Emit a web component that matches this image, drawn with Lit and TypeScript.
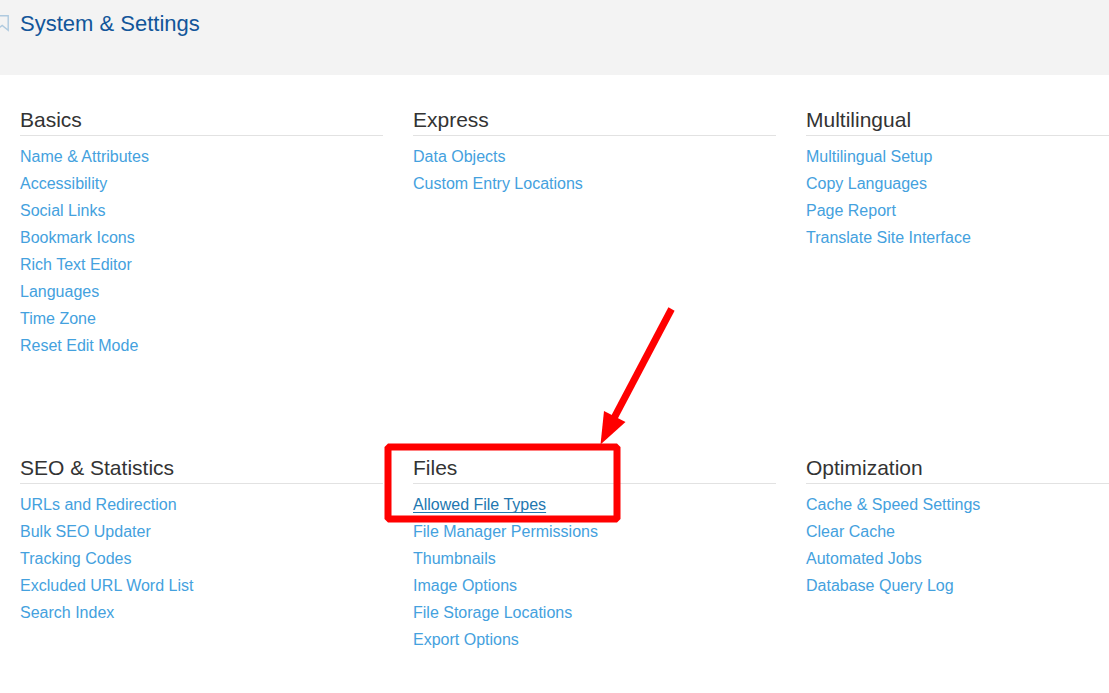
import { LitElement, html, css } from "lit";
import { customElement } from "lit/decorators.js";

interface Section {
  title: string;
  links: string[];
}

const sections: Section[] = [
  { title: "Basics", links: ["Name & Attributes", "Accessibility", "Social Links", "Bookmark Icons", "Rich Text Editor", "Languages", "Time Zone", "Reset Edit Mode"] },
  { title: "Express", links: ["Data Objects", "Custom Entry Locations"] },
  { title: "Multilingual", links: ["Multilingual Setup", "Copy Languages", "Page Report", "Translate Site Interface"] },
  { title: "SEO & Statistics", links: ["URLs and Redirection", "Bulk SEO Updater", "Tracking Codes", "Excluded URL Word List", "Search Index"] },
  { title: "Files", links: ["Allowed File Types", "File Manager Permissions", "Thumbnails", "Image Options", "File Storage Locations", "Export Options"] },
  { title: "Optimization", links: ["Cache & Speed Settings", "Clear Cache", "Automated Jobs", "Database Query Log"] },
];

const current = "Allowed File Types";

@customElement("app-root")
export class AppRoot extends LitElement {
  static styles = css`
    :host {
      display: block;
      position: relative;
      overflow: hidden;
      min-height: 100vh;
      background: #fff;
      color: #333;
      font: 16px/27px "Liberation Sans", Arial, sans-serif;
    }
    header {
      display: flex;
      align-items: flex-start;
      gap: 11px;
      box-sizing: border-box;
      height: 75px;
      padding-top: 8px;
      background: #f3f3f3;
    }
    .bookmark {
      flex: none;
      width: 9px;
      height: 17px;
      margin-top: 7px;
      padding: 0;
      border: 0;
      background: none;
    }
    .bookmark svg {
      display: block;
    }
    h1 {
      margin: 0;
      font-size: 22px;
      line-height: 32px;
      font-weight: 400;
      color: #12569a;
    }
    main {
      display: grid;
      grid-template-columns: repeat(3, minmax(0, 1fr));
      column-gap: 30px;
      row-gap: 96px;
      margin-right: -60px;
      padding: 32px 0 40px 20px;
    }
    h2 {
      margin: 0 0 7px;
      padding-bottom: 2px;
      border-bottom: 1px solid #e2e2e2;
      font-size: 21px;
      line-height: 26px;
      font-weight: 400;
    }
    ul {
      margin: 0;
      padding: 0;
      list-style: none;
    }
    a {
      color: #44a1de;
      text-decoration: none;
    }
    a.current {
      color: #2277b0;
      text-decoration: underline;
      text-decoration-skip-ink: none;
      text-underline-offset: 2px;
    }
    .markup {
      position: absolute;
      left: 380px;
      top: 300px;
      pointer-events: none;
    }
  `;

  render() {
    return html`
      <header>
        <button class="bookmark" aria-label="Bookmark this page">
          <svg width="9" height="17" viewBox="0 0 9 17" fill="none" stroke="#afcadf" stroke-width="1.4">
            <path d="M-2 .7H8.2V15.3L2.2 10.4L-4 15.3" />
          </svg>
        </button>
        <h1>System &amp; Settings</h1>
      </header>
      <main>
        ${sections.map(
          (s) => html`
            <section>
              <h2>${s.title}</h2>
              <ul>
                ${s.links.map((l) => html`<li><a href="#" class=${l === current ? "current" : ""}>${l}</a></li>`)}
              </ul>
            </section>
          `
        )}
      </main>
      <svg class="markup" width="300" height="230" viewBox="380 300 300 230" aria-hidden="true">
        <path d="M388 443.5H617L620.5 447V519L617 522.5H388L384.5 519V447ZM391.5 450.5V515.5H613.5V450.5Z" fill="#f00" fill-rule="evenodd" />
        <path d="M671.5 309L613 420" stroke="#f00" stroke-width="7" />
        <path d="M600.5 444.5L604 411L625.5 422Z" fill="#f00" />
      </svg>
    `;
  }
}
